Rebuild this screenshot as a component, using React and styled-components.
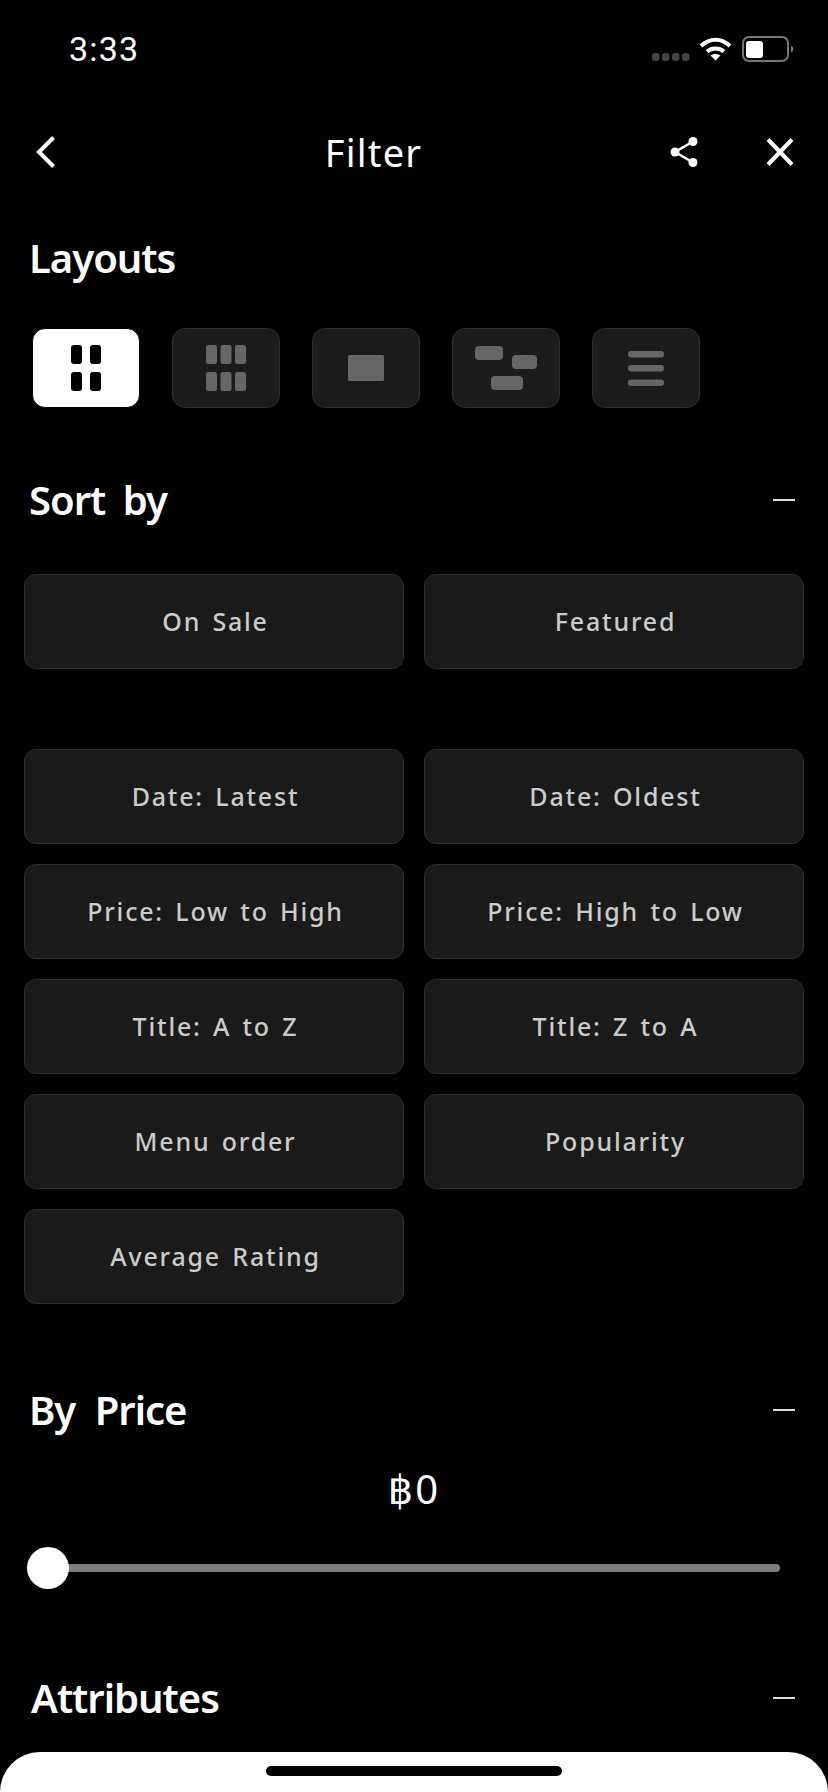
import React from 'react';
import styled, { createGlobalStyle } from 'styled-components';

const GlobalStyle = createGlobalStyle`
  html, body {
    margin: 0;
    padding: 0;
    background: #000;
  }
`;

const Page = styled.div`
  position: relative;
  width: 828px;
  height: 1792px;
  overflow: hidden;
  background: #000;
  color: #fff;
  font-family: "Noto Sans", "DejaVu Sans", sans-serif;
`;

const StatusBar = styled.div`
  display: flex;
  align-items: center;
  justify-content: space-between;
  height: 98px;
  padding: 0 34px 0 69px;
  box-sizing: border-box;
`;

const Time = styled.div`
  font-family: Roboto, sans-serif;
  font-size: 34px;
  letter-spacing: 1.2px;
  line-height: 100px;
`;

const StatusIcons = styled.div`
  display: flex;
  align-items: center;
`;

const NavBar = styled.div`
  display: flex;
  align-items: center;
  justify-content: space-between;
  height: 84px;
  margin-top: 12px;
  padding: 0 34px 0 32px;
`;

const NavBack = styled.div`
  display: flex;
  width: 46px;
`;

const NavTitle = styled.div`
  font-size: 38px;
  line-height: 82px;
  letter-spacing: 1.2px;
`;

const NavActions = styled.div`
  display: flex;
  align-items: center;
  gap: 67px;
`;

const Heading = styled.div`
  font-size: 40px;
  font-weight: 600;
  line-height: 52px;
  letter-spacing: -1px;
  word-spacing: ${p => p.$wordGap || 8}px;
  margin-left: ${p => p.$indent || 0}px;
`;

const SectionHead = styled.div`
  display: flex;
  align-items: center;
  justify-content: space-between;
  padding: 0 33px 0 29px;
  margin-top: ${p => p.$top}px;
`;

const Minus = styled.div`
  width: 22px;
  height: 2px;
  background: #ddd;
`;

const LayoutRow = styled.div`
  display: flex;
  gap: 32px;
  padding: 0 32px;
  margin-top: 44px;
`;

const LayoutButton = styled.div`
  display: flex;
  align-items: center;
  justify-content: center;
  box-sizing: border-box;
  width: 108px;
  height: 80px;
  border-radius: 13px;
  background: ${p => (p.$active ? '#fff' : '#1b1b1b')};
  border: 1px solid ${p => (p.$active ? '#000' : '#2c2c2c')};
  color: ${p => (p.$active ? '#000' : '#666')};
`;

const SortGrid = styled.div`
  display: grid;
  grid-template-columns: 380px 380px;
  grid-auto-rows: 95px;
  column-gap: 20px;
  row-gap: 20px;
  padding: 0 24px;
  margin-top: ${p => p.$top}px;
`;

const SortButton = styled.div`
  display: flex;
  align-items: center;
  justify-content: center;
  box-sizing: border-box;
  padding: 0 0 2px 3px;
  border: 1px solid #2e2e2e;
  border-radius: 12px;
  background: #1a1a1a;
  color: #cbcbcb;
  font-size: 25px;
  font-weight: 500;
  letter-spacing: 1.8px;
  word-spacing: 3px;
`;

const PriceValue = styled.div`
  margin-top: 27px;
  text-align: center;
  font-size: 40px;
  line-height: 52px;
  letter-spacing: 2px;
`;

const Slider = styled.div`
  position: relative;
  height: 42px;
  margin: 32px 48px 0 27px;
  display: flex;
  align-items: center;
`;

const Track = styled.div`
  flex: 1;
  height: 8px;
  border-radius: 4px;
  background: #7a7a7a;
`;

const Thumb = styled.div`
  position: absolute;
  left: 0;
  top: 0;
  width: 42px;
  height: 42px;
  border-radius: 50%;
  background: #fff;
`;

const BottomSheet = styled.div`
  position: absolute;
  left: 0;
  right: 0;
  bottom: 0;
  height: 40px;
  display: flex;
  justify-content: center;
  padding-top: 14px;
  box-sizing: border-box;
  background: #fff;
  border-radius: 40px 40px 0 0;
`;

const HomeBar = styled.div`
  width: 296px;
  height: 10px;
  border-radius: 5px;
  background: #000;
`;

const SignalDots = styled.svg`
  margin-top: 15px;
  margin-right: 9px;
`;

const BatteryIcon = styled.svg`
  margin-left: 10px;
`;

const WifiIcon = () => (
  <svg width="33" height="24" viewBox="0 0 33 24" fill="none" stroke="#fff" strokeWidth="4">
    <path d="M2 9 C10.5 0.5 22.5 0.5 31 9" />
    <path d="M8 14.5 C12.8 10.5 20.2 10.5 25 14.5" />
    <path d="M16.5 23.5 L11.5 18.5 C14 16.4 19 16.4 21.5 18.5 Z" fill="#fff" stroke="none" />
  </svg>
);

const Signal = () => (
  <SignalDots width="38" height="8" viewBox="0 0 38 8" fill="#444">
    <rect x="0" y="0" width="7.5" height="8" rx="3" />
    <rect x="10" y="0" width="7.5" height="8" rx="3" />
    <rect x="20" y="0" width="7.5" height="8" rx="3" />
    <rect x="30" y="0" width="7.5" height="8" rx="3" />
  </SignalDots>
);

const Battery = () => (
  <BatteryIcon width="52" height="26" viewBox="0 0 52 26">
    <rect x="1" y="1" width="45" height="24" rx="6" fill="none" stroke="#777" strokeWidth="2" />
    <rect x="4" y="5" width="17" height="17" rx="3" fill="#fff" />
    <path d="M49 9.5 C52 10.5 52 15.5 49 16.5 Z" fill="#777" />
  </BatteryIcon>
);

const BackIcon = () => (
  <svg width="24" height="34" viewBox="0 0 24 34" fill="none" stroke="#fff" strokeWidth="4">
    <path d="M21.5 2.5 L7 17 L21.5 31.5" />
  </svg>
);

const ShareIcon = () => (
  <svg width="30" height="32" viewBox="0 0 30 32" fill="#fff" stroke="#fff">
    <path d="M24 5.5 L6 16 L24 26.5" fill="none" strokeWidth="2.6" />
    <circle cx="24" cy="5.5" r="4.5" stroke="none" />
    <circle cx="6" cy="16" r="4.5" stroke="none" />
    <circle cx="24" cy="26.5" r="4.5" stroke="none" />
  </svg>
);

const CloseIcon = () => (
  <svg width="28" height="30" viewBox="0 0 28 30" fill="none" stroke="#fff" strokeWidth="4">
    <path d="M2 2.5 L26 27.5 M26 2.5 L2 27.5" />
  </svg>
);

const GridTwoIcon = () => (
  <svg width="30" height="46" viewBox="0 0 30 46" fill="currentColor">
    <rect x="0" y="0" width="11" height="19" rx="3" />
    <rect x="19" y="0" width="11" height="19" rx="3" />
    <rect x="0" y="27" width="11" height="19" rx="3" />
    <rect x="19" y="27" width="11" height="19" rx="3" />
  </svg>
);

const GridThreeIcon = () => (
  <svg width="40" height="46" viewBox="0 0 40 46" fill="currentColor">
    <rect x="0" y="0" width="11" height="19" rx="2.5" />
    <rect x="14.5" y="0" width="11" height="19" rx="2.5" />
    <rect x="29" y="0" width="11" height="19" rx="2.5" />
    <rect x="0" y="27" width="11" height="19" rx="2.5" />
    <rect x="14.5" y="27" width="11" height="19" rx="2.5" />
    <rect x="29" y="27" width="11" height="19" rx="2.5" />
  </svg>
);

const SingleIcon = () => (
  <svg width="36" height="26" viewBox="0 0 36 26" fill="currentColor">
    <rect x="0" y="0" width="36" height="26" rx="1.5" />
  </svg>
);

const MasonryIcon = () => (
  <svg width="62" height="44" viewBox="0 0 62 44" fill="currentColor">
    <rect x="0" y="0" width="28" height="14" rx="4" />
    <rect x="37" y="9" width="25" height="14" rx="4" />
    <rect x="16" y="30" width="32" height="14" rx="4" />
  </svg>
);

const ListIcon = () => (
  <svg width="36" height="35" viewBox="0 0 36 35" fill="currentColor">
    <rect x="0" y="0" width="36" height="6.5" rx="3.2" />
    <rect x="0" y="14" width="36" height="6.5" rx="3.2" />
    <rect x="0" y="28.5" width="36" height="6.5" rx="3.2" />
  </svg>
);

const layouts = [GridTwoIcon, GridThreeIcon, SingleIcon, MasonryIcon, ListIcon];
const sortOptions = [
  'Date: Latest', 'Date: Oldest',
  'Price: Low to High', 'Price: High to Low',
  'Title: A to Z', 'Title: Z to A',
  'Menu order', 'Popularity',
  'Average Rating',
];

export default function App() {
  return (
    <Page>
      <GlobalStyle />
      <StatusBar>
        <Time>3:33</Time>
        <StatusIcons>
          <Signal />
          <WifiIcon />
          <Battery />
        </StatusIcons>
      </StatusBar>
      <NavBar>
        <NavBack>
          <BackIcon />
        </NavBack>
        <NavTitle>Filter</NavTitle>
        <NavActions>
          <ShareIcon />
          <CloseIcon />
        </NavActions>
      </NavBar>
      <SectionHead $top={38}>
        <Heading>Layouts</Heading>
      </SectionHead>
      <LayoutRow>
        {layouts.map((Icon, i) => (
          <LayoutButton key={i} $active={i === 0}>
            <Icon />
          </LayoutButton>
        ))}
      </LayoutRow>
      <SectionHead $top={66}>
        <Heading>Sort by</Heading>
        <Minus />
      </SectionHead>
      <SortGrid $top={48}>
        <SortButton>On Sale</SortButton>
        <SortButton>Featured</SortButton>
      </SortGrid>
      <SortGrid $top={80}>
        {sortOptions.map(label => (
          <SortButton key={label}>{label}</SortButton>
        ))}
      </SortGrid>
      <SectionHead $top={80}>
        <Heading $wordGap={10}>By Price</Heading>
        <Minus />
      </SectionHead>
      <PriceValue>฿0</PriceValue>
      <Slider>
        <Track />
        <Thumb />
      </Slider>
      <SectionHead $top={83}>
        <Heading $indent={2}>Attributes</Heading>
        <Minus />
      </SectionHead>
      <BottomSheet>
        <HomeBar />
      </BottomSheet>
    </Page>
  );
}
